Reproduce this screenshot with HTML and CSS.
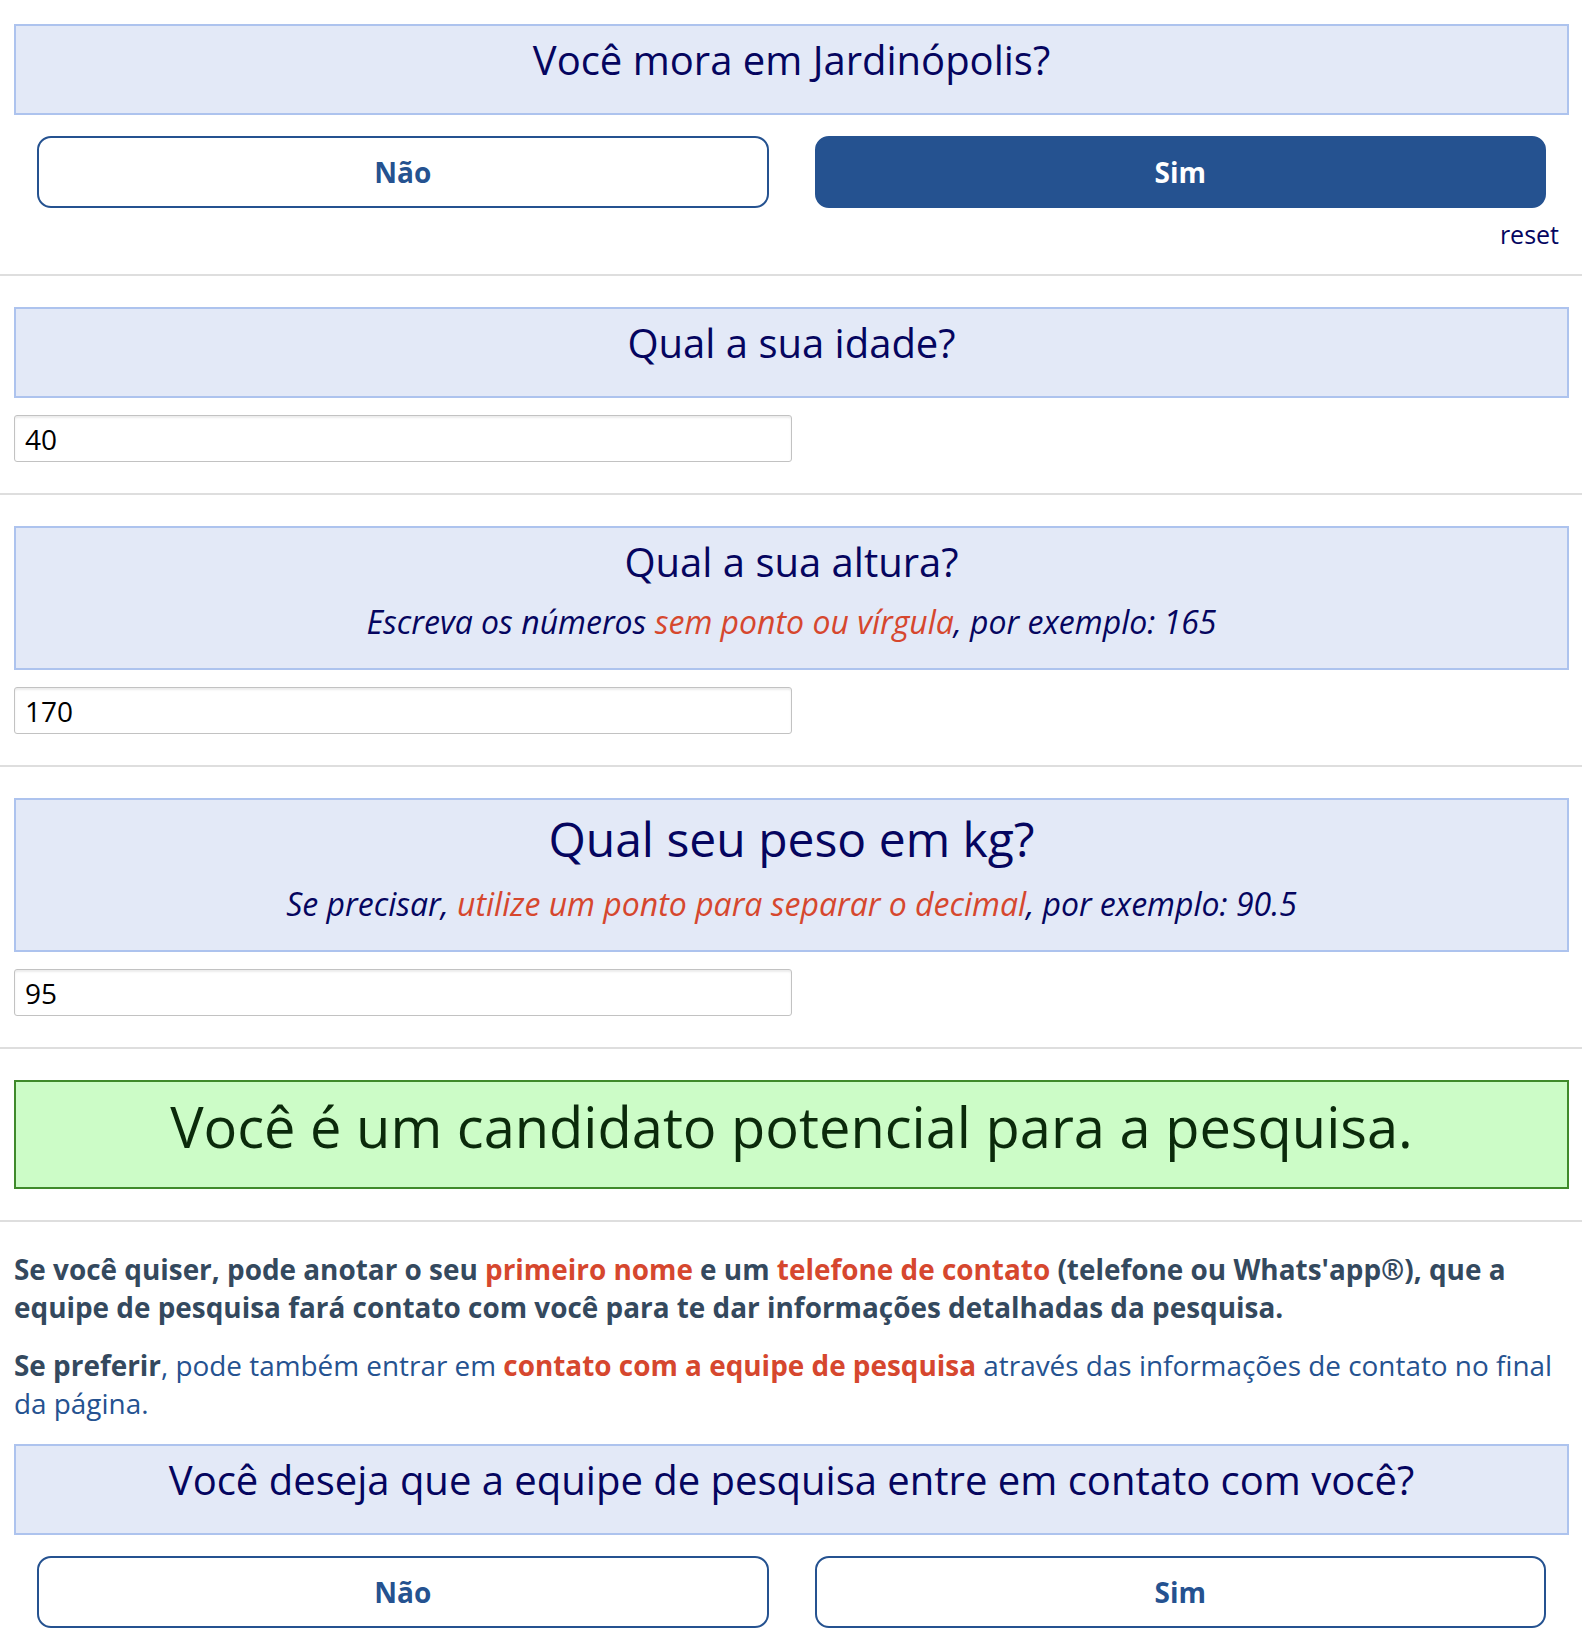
FILE: index.html
```html
<!DOCTYPE html>
<html lang="pt-BR">
<head>
<meta charset="utf-8">
<title>Pesquisa</title>
<link rel="stylesheet" href="styles.css">
</head>
<body>
<section class="section first">
  <div class="qbox"><h2 class="qtitle">Você mora em Jardinópolis?</h2></div>
  <div class="choices">
    <div class="col"><button class="choice">Não</button></div>
    <div class="col"><button class="choice selected">Sim</button></div>
  </div>
  <div class="reset">reset</div>
</section>

<section class="section">
  <div class="qbox"><h2 class="qtitle">Qual a sua idade?</h2></div>
  <div class="inputrow"><input class="field" type="text" value="40"></div>
</section>

<section class="section">
  <div class="qbox">
    <h2 class="qtitle">Qual a sua altura?</h2>
    <p class="qsub">Escreva os números <span class="hl">sem ponto ou vírgula</span>, por exemplo: 165</p>
  </div>
  <div class="inputrow"><input class="field" type="text" value="170"></div>
</section>

<section class="section">
  <div class="qbox">
    <h2 class="qtitle big">Qual seu peso em kg?</h2>
    <p class="qsub">Se precisar, <span class="hl">utilize um ponto para separar o decimal</span>, por exemplo: 90.5</p>
  </div>
  <div class="inputrow"><input class="field" type="text" value="95"></div>
</section>

<section class="section">
  <div class="result">Você é um candidato potencial para a pesquisa.</div>
</section>

<section class="section last">
  <p class="para strong">Se você quiser, pode anotar o seu <span class="red">primeiro nome</span> e um <span class="red">telefone de contato</span> (telefone ou Whats'app®), que a equipe de pesquisa fará contato com você para te dar informações detalhadas da pesquisa.</p>
  <p class="para plain"><span class="dark">Se preferir</span>, pode também entrar em <span class="red">contato com a equipe de pesquisa</span> através das informações de contato no final da página.</p>
  <div class="qbox"><h2 class="qtitle">Você deseja que a equipe de pesquisa entre em contato com você?</h2></div>
  <div class="choices">
    <div class="col"><button class="choice">Não</button></div>
    <div class="col"><button class="choice">Sim</button></div>
  </div>
</section>
</body>
</html>
```
FILE: styles.css
```css
* { box-sizing: border-box; }
html, body { margin: 0; padding: 0; background: #fff; }
body {
  font-family: "Open Sans", "Noto Sans", "Liberation Sans", sans-serif;
  color: #05055f;
}
.section {
  padding: 31px 13px 31px 14px;
  border-bottom: 2px solid #dedede;
}
.section.first { padding-top: 24px; padding-bottom: 23px; }
.section.last { border-bottom: none; padding-top: 28px; padding-bottom: 13px; }

.qbox {
  background: #e3e9f7;
  border: 2px solid #adc3ee;
  padding: 6px 10px 26px;
  text-align: center;
}
.qtitle {
  margin: 0;
  font-size: 40px;
  font-weight: 400;
  line-height: normal;
  color: #05055f;
}
.qtitle.big { font-size: 48px; }
.qsub {
  margin: 12px 0 0;
  font-size: 32px;
  font-style: italic;
  line-height: 41px;
  color: #05055f;
}
.qsub .hl { color: #d6472e; }

.choices {
  display: grid;
  grid-template-columns: 1fr 1fr;
  margin-top: 21px;
}
.col { padding: 0 23px; }
.choice {
  display: block;
  width: 100%;
  height: 72px;
  border: 2px solid #255290;
  border-radius: 14px;
  background: #fff;
  color: #255290;
  font-family: "Open Sans", "Noto Sans", sans-serif;
  font-size: 28px;
  font-weight: 700;
  cursor: pointer;
}
.choice.selected { background: #255290; color: #fff; }

.reset {
  margin-top: 9px;
  text-align: right;
  padding-right: 10px;
  font-size: 25px;
  line-height: 34px;
  color: #05055f;
}

.inputrow { margin-top: 17px; width: 50%; }
.field {
  display: block;
  width: 100%;
  height: 47px;
  border: 1px solid #c2c2c2;
  border-radius: 3px;
  box-shadow: inset 0 2px 2px rgba(0,0,0,0.08);
  padding: 0 10px;
  font-family: "Open Sans", "Noto Sans", sans-serif;
  font-size: 28px;
  color: #000;
  background: #fff;
}

.result {
  background: #ccfcc7;
  border: 2px solid #3f8a2b;
  padding: 6px 10px 23px;
  text-align: center;
  font-size: 56px;
  line-height: normal;
  color: #0b2a0b;
}

.para {
  margin: 0 0 20px;
  font-size: 27.9px;
  line-height: 38px;
}
.para.strong { font-weight: 700; color: #34495e; }
.para.plain { color: #255290; margin-bottom: 22px; }
.para .dark { font-weight: 700; color: #34495e; }
.para .red { font-weight: 700; color: #d6472e; }
.section.last .choices { margin-top: 21px; }
```
